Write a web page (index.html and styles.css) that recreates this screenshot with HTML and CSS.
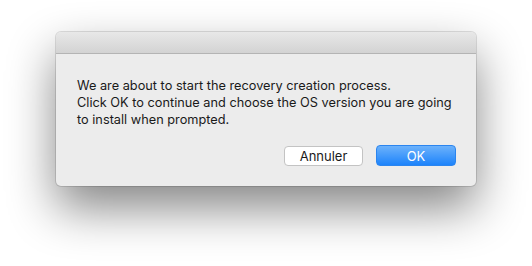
FILE: index.html
```html
<!DOCTYPE html>
<html>
<head>
<meta charset="utf-8">
<link rel="stylesheet" href="styles.css">
</head>
<body>
<div class="stage">
  <div class="window">
    <div class="titlebar"></div>
    <div class="content">
      <p class="message">We are about to start the recovery creation process.<br>Click OK to continue and choose the OS version you are going<br>to install when prompted.</p>
      <div class="buttons">
        <button class="btn cancel">Annuler</button>
        <button class="btn ok">OK</button>
      </div>
    </div>
  </div>
</div>
</body>
</html>
```
FILE: styles.css
```css
html, body {
  margin: 0;
  padding: 0;
  background: #ffffff;
  width: 532px;
  height: 266px;
  overflow: hidden;
}
.stage {
  padding: 32px 0 0 56px;
}
.window {
  width: 420px;
  height: 154px;
  border-radius: 5px;
  background: #ececec;
  box-shadow: 0 0 0 1px rgba(0,0,0,0.12), 0 22px 48px rgba(0,0,0,0.48);
  overflow: hidden;
  display: flex;
  flex-direction: column;
  font-family: Inter, "Liberation Sans", Arial, sans-serif;
}
.titlebar {
  height: 21px;
  background: linear-gradient(#e8e8e8, #d3d3d3);
  border-bottom: 1px solid #b4b4b4;
}
.content {
  padding: 23px 20px 0 21px;
}
.message {
  margin: 0;
  font-size: 12.75px;
  line-height: 17px;
  color: #1a1a1a;
  white-space: nowrap;
}
.buttons {
  display: flex;
  justify-content: flex-end;
  gap: 13px;
  margin-top: 17px;
}
.btn {
  font-family: Inter, "Liberation Sans", Arial, sans-serif;
  font-size: 13px;
  height: 21px;
  width: 80px;
  border-radius: 4px;
  padding: 0;
}
.cancel {
  background: #ffffff;
  border: 1px solid #c3c3c3;
  color: #1a1a1a;
  height: 20px;
  width: 79px;
  margin-top: 1px;
}
.ok {
  background: linear-gradient(#6cb2fb, #1d83fb);
  border: 1px solid #2b85ef;
  color: #ffffff;
}
```
